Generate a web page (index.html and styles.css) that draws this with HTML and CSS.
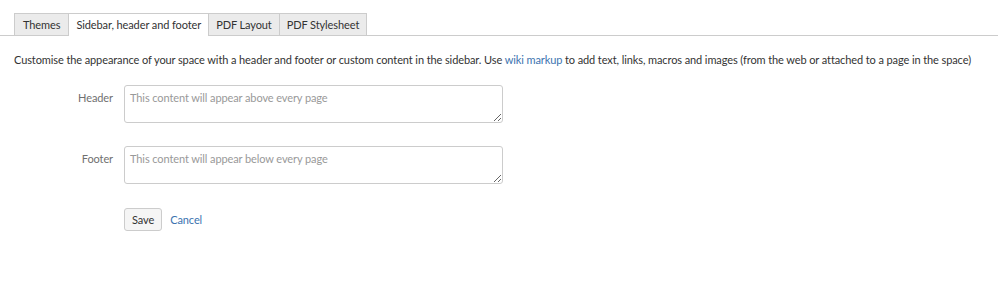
FILE: index.html
```html
<!DOCTYPE html>
<html lang="en">
<head>
    <meta charset="UTF-8">
    <title>Look and Feel</title>
    <link rel="stylesheet" href="styles.css">
</head>
<body>
    <ul class="tabs">
        <li class="tab">Themes</li>
        <li class="tab active">Sidebar, header and footer</li>
        <li class="tab">PDF Layout</li>
        <li class="tab">PDF Stylesheet</li>
    </ul>
    <p class="intro">Customise the appearance of your space with a header and footer or custom content in the sidebar. Use <a href="#">wiki markup</a> to add text, links, macros and images (from the web or attached to a page in the space)</p>
    <form class="settings">
        <div class="field">
            <label for="header">Header</label>
            <textarea id="header" placeholder="This content will appear above every page"></textarea>
        </div>
        <div class="field">
            <label for="footer">Footer</label>
            <textarea id="footer" placeholder="This content will appear below every page"></textarea>
        </div>
        <div class="buttons">
            <button type="button" class="btn">Save</button>
            <a href="#" class="cancel">Cancel</a>
        </div>
    </form>
</body>
</html>
```

FILE: styles.css
```css
body {
    margin: 0;
    font-family: Lato, "Open Sans", sans-serif;
    font-size: 11px;
    letter-spacing: -0.1px;
    color: #333;
}
a {
    color: #3b73af;
    text-decoration: none;
}
.tabs {
    display: flex;
    list-style: none;
    margin: 13px 0 0;
    padding: 0 0 0 14px;
    border-bottom: 1px solid #ccc;
}
.tab {
    height: 21px;
    line-height: 21px;
    padding: 0 7px;
    background: #ebebeb;
    border: 1px solid #ccc;
    border-bottom: 0;
    margin-bottom: -1px;
    margin-right: -1px;
    color: #333;
}
.tab:first-child {
    padding: 0 8px;
}
.tab.active {
    background: #fff;
    height: 22px;
}
.intro {
    margin: 15px 14px 0;
    line-height: 18px;
    white-space: nowrap;
}
.settings {
    padding-top: 16px;
}
.field {
    display: flex;
    align-items: flex-start;
    margin-bottom: 23px;
}
.field label {
    width: 113px;
    text-align: right;
    padding-right: 11px;
    padding-top: 6px;
    color: #707070;
}
.field textarea {
    width: 367px;
    height: 26px;
    padding: 5px;
    border: 1px solid #ccc;
    border-radius: 3px;
    font-family: inherit;
    font-size: 11px;
    letter-spacing: -0.1px;
    color: #333;
}
.field textarea::placeholder {
    color: #999;
}
.buttons {
    display: flex;
    align-items: center;
    padding-left: 124px;
    margin-top: 24px;
}
.btn {
    height: 23px;
    padding: 0 7px;
    background: #f5f5f5;
    border: 1px solid #ccc;
    border-radius: 3px;
    font-family: inherit;
    font-size: 11px;
    letter-spacing: -0.1px;
    color: #333;
}
.cancel {
    margin-left: 8px;
}
```
